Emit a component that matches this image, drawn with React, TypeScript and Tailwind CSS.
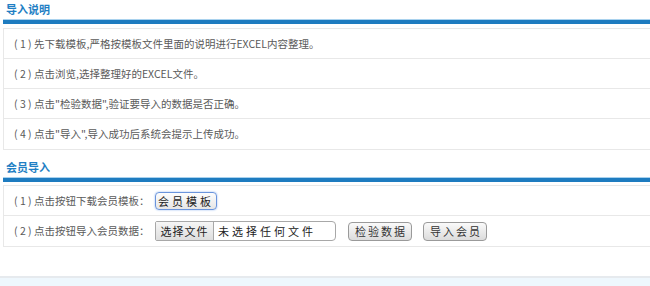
const font = "font-['Microsoft_YaHei','Noto_Sans_CJK_SC',sans-serif]"

function SectionTitle({ text, className = '' }: { text: string; className?: string }) {
    return (
        <div className={className}>
            <div className="pl-[3px] text-[11px] leading-[14px] font-bold text-[#1f7fc4]">{text}</div>
            <div className="mt-[3px] h-[5px] border-t border-[#a9d2ee] bg-[#1e7cc0]" />
        </div>
    )
}

function Row({ children, last = false }: { children: React.ReactNode; last?: boolean }) {
    return (
        <div className={`flex h-[30px] items-center pl-[10px] text-[10.5px] text-[#5a5a5a] ${last ? '' : 'border-b border-[#e8e8e8]'}`}>
            {children}
        </div>
    )
}

function GrayButton({ label, className = '' }: { label: string; className?: string }) {
    return (
        <button
            type="button"
            className={`h-[19px] rounded-[4px] border border-[#9a9a9a] bg-gradient-to-b from-[#fafafa] to-[#dcdcdc] pl-[6px] pr-[4px] text-[11px] leading-[17px] tracking-[2px] text-[#333] ${className}`}
        >
            {label}
        </button>
    )
}

export default function App() {
    const steps = [
        '( 1 ) 先下载模板,严格按模板文件里面的说明进行EXCEL内容整理。',
        '( 2 ) 点击浏览,选择整理好的EXCEL文件。',
        '( 3 ) 点击"检验数据",验证要导入的数据是否正确。',
        '( 4 ) 点击"导入",导入成功后系统会提示上传成功。',
    ]

    return (
        <div className={`h-[286px] w-[650px] overflow-hidden bg-white ${font}`}>
            <SectionTitle text="导入说明" className="ml-[3px] pt-[2px]" />
            <div className="ml-[3px] mt-[4px] border border-r-0 border-[#e8e8e8]">
                {steps.map((s, i) => (
                    <Row key={i} last={i === steps.length - 1}>
                        {s}
                    </Row>
                ))}
            </div>

            <SectionTitle text="会员导入" className="ml-[3px] mt-[10px]" />
            <div className="ml-[3px] mt-[3px] border border-r-0 border-[#e8e8e8]">
                <Row>
                    <span className="w-[141px]">( 1 ) 点击按钮下载会员模板：</span>
                    <button
                        type="button"
                        className="h-[18px] w-[62px] rounded-[4px] border border-[#6a94dc] bg-gradient-to-b from-[#fdfdfd] to-[#e6e6e6] text-[11px] leading-[16px] tracking-[3px] text-[#222] shadow-[0_0_2px_#8fb4f0]"
                    >
                        会员模板
                    </button>
                </Row>
                <Row last>
                    <span className="w-[141px]">( 2 ) 点击按钮导入会员数据：</span>
                    <div className="flex h-[20px] w-[181px] items-stretch rounded-r-[4px] rounded-l-[2px] border border-[#a8a8a8] bg-white text-[11px] text-[#222]">
                        <span className="flex w-[58px] items-center justify-center border-r border-[#a8a8a8] bg-gradient-to-b from-[#f6f6f6] to-[#dedede] tracking-[1px]">
                            选择文件
                        </span>
                        <span className="flex items-center pl-[4px] tracking-[3px]">未选择任何文件</span>
                    </div>
                    <GrayButton label="检验数据" className="ml-[12px]" />
                    <GrayButton label="导入会员" className="ml-[11px]" />
                </Row>
            </div>

            <div className="mt-[29px] h-[12px] border-t-2 border-[#e6eaee] bg-[#eef7fd]" />
        </div>
    )
}
